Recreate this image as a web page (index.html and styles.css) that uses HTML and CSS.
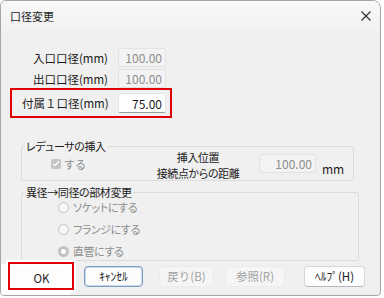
FILE: index.html
```html
<!DOCTYPE html>
<html lang="ja">
<head>
    <meta charset="UTF-8">
    <title>口径変更</title>
    <link rel="stylesheet" href="styles.css">
</head>
<body>
    <!-- Dialog -->
    <div class="window">
        <div class="titlebar">
            <span class="title">口径変更</span>
            <svg class="close" width="10" height="10" viewBox="0 0 10 10">
                <path d="M0.5 0.5 L9.5 9.5 M9.5 0.5 L0.5 9.5" stroke="#2b2b2b" stroke-width="1.1" fill="none"/>
            </svg>
        </div>

        <div class="content">
            <!-- Diameters -->
            <div class="fields">
                <div class="row">
                    <label>入口口径(mm)</label>
                    <input class="num" type="text" value="100.00" disabled>
                </div>
                <div class="row">
                    <label>出口口径(mm)</label>
                    <input class="num" type="text" value="100.00" disabled>
                </div>
                <div class="row mark">
                    <label>付属１口径(mm)</label>
                    <input class="num active" type="text" value="75.00">
                </div>
            </div>

            <!-- Reducer -->
            <fieldset class="group reducer">
                <legend class="kana">レデューサの挿入</legend>
                <div class="reducer-body">
                    <span class="check"><span class="box">
                        <svg width="8" height="7" viewBox="0 0 8 7"><path d="M1 3.6 L3 5.6 L7 1.2" stroke="#fff" stroke-width="1.3" fill="none"/></svg>
                    </span>する</span>
                    <span class="pos kana"><span class="line">挿入位置</span><span class="line">接続点からの距離</span></span>
                    <input class="num dist" type="text" value="100.00" disabled>
                    <span class="unit">mm</span>
                </div>
            </fieldset>

            <!-- Part change -->
            <fieldset class="group change">
                <legend class="kana">異径→同径の部材変更</legend>
                <div class="radios kana">
                    <span class="radio"><span class="dot"></span>ソケットにする</span>
                    <span class="radio"><span class="dot"></span>フランジにする</span>
                    <span class="radio"><span class="dot on"></span>直管にする</span>
                </div>
            </fieldset>

            <!-- Buttons -->
            <div class="buttons">
                <div class="ok-wrap"><button class="btn">OK</button></div>
                <button class="btn default cancel">ｷｬﾝｾﾙ</button>
                <button class="btn back" disabled>戻り(B)</button>
                <button class="btn ref" disabled>参照(R)</button>
                <button class="btn help">ﾍﾙﾌﾟ(H)</button>
            </div>
        </div>
    </div>
</body>
</html>
```

FILE: styles.css
```css
/* General */
body {
    margin: 0;
    background-color: #fff;
    font-family: "Noto Sans CJK JP", "Noto Sans", sans-serif;
    font-size: 11px;
    color: #1b1b1b;
}
.kana {
    font-feature-settings: "palt";
    letter-spacing: -0.4px;
}
.window {
    width: 379px;
    height: 294px;
    border: 1px solid #a6a6a6;
    border-radius: 6px 8px 4px 4px;
    background-color: #f0f0f0;
    overflow: hidden;
}

/* Title bar */
.titlebar {
    height: 29px;
    display: flex;
    align-items: center;
    justify-content: space-between;
    padding: 0 9px 0 9px;
    background: linear-gradient(#f8f8f8, #f1f1f1);
}
.title {
    line-height: 16px;
}

/* Number fields */
.fields {
    margin: 18px 0 0 9px;
}
.row {
    display: flex;
    align-items: center;
    height: 19px;
    padding-left: 12px;
    margin-bottom: 2px;
    font-size: 12px;
}
.row label {
    flex-shrink: 0;
    width: 86px;
    margin-right: 10px;
    text-align: right;
    white-space: nowrap;
    font-size: 11.5px;
}
.row.mark {
    width: 144px;
    height: 20px;
    padding: 3px 4px 3px 10px;
    margin: -2px 0 0 0;
    border: 2px solid #e00000;
}
.num {
    box-sizing: border-box;
    flex-shrink: 0;
    width: 48px;
    height: 19px;
    margin: 0;
    padding: 0 3px 0 0;
    font-family: inherit;
    font-size: 12px;
    text-align: right;
    border: 1px solid #e2e2e2;
    border-radius: 2px;
    background-color: #f3f3f3;
    color: #8d8d8d;
}
.num.active {
    height: 20px;
    background-color: #fff;
    color: #1b1b1b;
    border-color: #e6e6e6;
    border-bottom-color: #9a9a9a;
}

/* Group boxes */
.group {
    margin: 0 0 0 20px;
    padding: 0;
    border: 1px solid #dcdcdc;
    border-radius: 2px;
}
.group legend {
    margin-left: 3px;
    padding: 0 1px;
    line-height: 14px;
}
.reducer {
    width: 331px;
    margin-top: 21px;
}
.reducer-body {
    display: flex;
    align-items: center;
    height: 19px;
    padding: 1px 0 7px 29px;
}
.check {
    flex-shrink: 0;
    display: flex;
    align-items: center;
    width: 92px;
    color: #8d8d8d;
}
.box {
    display: flex;
    align-items: center;
    justify-content: center;
    width: 10px;
    height: 10px;
    margin-right: 3px;
    border-radius: 2px;
    background-color: #c4c4c4;
}
.pos {
    flex-shrink: 0;
    display: flex;
    flex-direction: column;
    align-items: center;
    width: 110px;
    padding-top: 2px;
    white-space: nowrap;
}
.pos .line {
    height: 16px;
    line-height: 16px;
}
.dist {
    width: 57px;
    margin-left: 6px;
}
.unit {
    margin: 10px 0 0 6px;
    font-size: 12px;
}

.change {
    width: 336px;
    margin-top: 4px;
}
.radios {
    display: flex;
    flex-direction: column;
    gap: 6px;
    padding: 0 0 1px 36px;
}
.radio {
    display: flex;
    align-items: center;
    height: 16px;
    color: #8d8d8d;
}
.dot {
    box-sizing: border-box;
    width: 11px;
    height: 11px;
    margin-right: 4px;
    border: 1px solid #c2c2c2;
    border-radius: 50%;
    background-color: #f7f7f7;
}
.dot.on {
    border: 3px solid #c2c2c2;
    background-color: #fff;
}

/* Buttons */
.buttons {
    display: flex;
    align-items: center;
    margin-top: 1px;
}
.ok-wrap {
    margin-left: 7px;
    padding: 3px 1px 0 2px;
    height: 21px;
    border: 2px solid #e00000;
    background-color: #fff;
    box-shadow: 0 0 0 2px #fff, -6px 4px 0 2px #fff;
}
.btn {
    box-sizing: border-box;
    flex-shrink: 0;
    height: 21px;
    width: 59px;
    padding: 0;
    font-family: inherit;
    font-size: 11.5px;
    color: #1b1b1b;
    background-color: #fdfdfd;
    border: 1px solid #d6d6d6;
    border-bottom-color: #b8b8b8;
    border-radius: 4px;
}
.ok-wrap .btn {
    border-color: #fff;
}
.btn.default {
    border: 1px solid #7d9cc4;
    box-shadow: inset 0 0 0 1px #c9d8ea;
}
.btn[disabled] {
    color: #a3a3a3;
    background-color: #f5f5f5;
    border-color: #ececec;
}
.cancel {
    margin-left: 10px;
}
.back {
    width: 55px;
    margin-left: 16px;
}
.ref {
    width: 60px;
    margin-left: 11px;
}
.help {
    width: 61px;
    margin-left: 19px;
}
```
